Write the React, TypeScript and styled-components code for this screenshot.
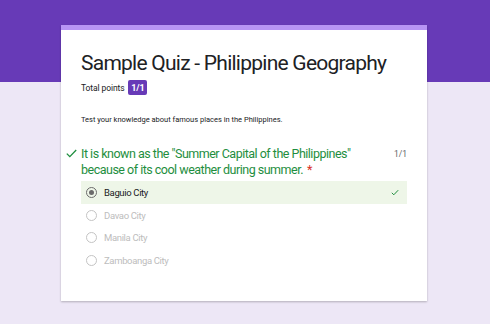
import styled, { createGlobalStyle } from 'styled-components';

const GlobalStyle = createGlobalStyle`
  html, body {
    margin: 0;
    padding: 0;
    background: #ede7f6;
    font-family: Roboto, "Noto Sans", Arial, sans-serif;
  }
`;

const Page = styled.div`
  height: 324px;
  background: linear-gradient(#673ab7 0, #673ab7 82px, #ede7f6 82px);
  padding: 25px 0 0 61px;
  box-sizing: border-box;
  display: flex;
`;

const Card = styled.div`
  width: 366px;
  height: 276px;
  background: #fff;
  border-top: 5px solid #b794f4;
  box-sizing: border-box;
  box-shadow: 0 1px 2px rgba(0, 0, 0, 0.25);
  padding: 19px 20px 0 20px;
`;

const Title = styled.h1`
  margin: 0;
  font-size: 21px;
  font-weight: 400;
  letter-spacing: -0.75px;
  line-height: 28px;
  color: #202124;
  white-space: nowrap;
`;

const PointsRow = styled.div`
  display: flex;
  align-items: center;
  gap: 4px;
  margin-top: 3px;
  font-size: 8.5px;
  letter-spacing: -0.1px;
  color: #202124;
`;

const Badge = styled.span`
  background: #673ab7;
  color: #fff;
  font-weight: 700;
  font-size: 9px;
  width: 19px;
  height: 15px;
  border-radius: 2px;
  display: flex;
  align-items: center;
  justify-content: center;
`;

const Description = styled.p`
  margin: 20px 0 0 0;
  font-size: 7.5px;
  color: #202124;
`;

const Question = styled.div`
  position: relative;
  margin-top: 22px;
  display: flex;
  justify-content: space-between;
`;

const QuestionText = styled.div<{ $required?: boolean }>`
  font-size: 12.5px;
  letter-spacing: -0.5px;
  line-height: 16px;
  color: #1e8e3e;
  width: 300px;

  &::after {
    content: ${(p) => (p.$required ? "'*'" : "''")};
    color: #d93025;
    letter-spacing: 0;
    margin-left: 4px;
  }
`;

const Score = styled.span`
  font-size: 8.5px;
  color: #5f6368;
  padding-top: 3px;
`;

const CheckMark = styled.svg`
  position: absolute;
  left: -15px;
  top: 3px;
`;

const Options = styled.div`
  margin-top: 3px;
  display: flex;
  flex-direction: column;
`;

const Option = styled.div<{ $correct?: boolean }>`
  display: flex;
  align-items: center;
  height: 22.7px;
  padding: 0 8px 0 5px;
  background: ${(p) => (p.$correct ? '#eef6e8' : 'transparent')};
  color: ${(p) => (p.$correct ? '#202124' : '#bdbdbd')};
  font-size: 9.5px;
  letter-spacing: -0.35px;
`;

const Radio = styled.span<{ $checked?: boolean }>`
  width: 11px;
  height: 11px;
  box-sizing: border-box;
  border-radius: 50%;
  border: 1.3px solid ${(p) => (p.$checked ? '#6b6b6b' : '#c4c4c4')};
  display: flex;
  align-items: center;
  justify-content: center;
  margin-right: 7px;
  &::after {
    content: '';
    width: 5px;
    height: 5px;
    border-radius: 50%;
    background: ${(p) => (p.$checked ? '#6b6b6b' : 'transparent')};
  }
`;

const Label = styled.span`
  flex: 1;
`;

const options = ['Baguio City', 'Davao City', 'Manila City', 'Zamboanga City'];

export default function App() {
  return (
    <>
      <GlobalStyle />
      <Page>
        <Card>
          <Title>Sample Quiz - Philippine Geography</Title>
          <PointsRow>
            Total points <Badge>1/1</Badge>
          </PointsRow>
          <Description>Test your knowledge about famous places in the Philippines.</Description>
          <Question>
            <CheckMark width="11" height="9" viewBox="0 0 11 9">
              <path d="M0.8 4.6 L3.8 7.6 L10.2 1" fill="none" stroke="#1e8e3e" strokeWidth="1.3" />
            </CheckMark>
            <QuestionText $required>
              It is known as the "Summer Capital of the Philippines" because of its cool weather during summer.
            </QuestionText>
            <Score>1/1</Score>
          </Question>
          <Options>
            {options.map((o, i) => (
              <Option key={o} $correct={i === 0}>
                <Radio $checked={i === 0} />
                <Label>{o}</Label>
                {i === 0 && (
                  <svg width="8" height="7" viewBox="0 0 8 7">
                    <path d="M0.8 3.8 L2.8 5.8 L7.2 1.2" fill="none" stroke="#1e8e3e" strokeWidth="1" />
                  </svg>
                )}
              </Option>
            ))}
          </Options>
        </Card>
      </Page>
    </>
  );
}
